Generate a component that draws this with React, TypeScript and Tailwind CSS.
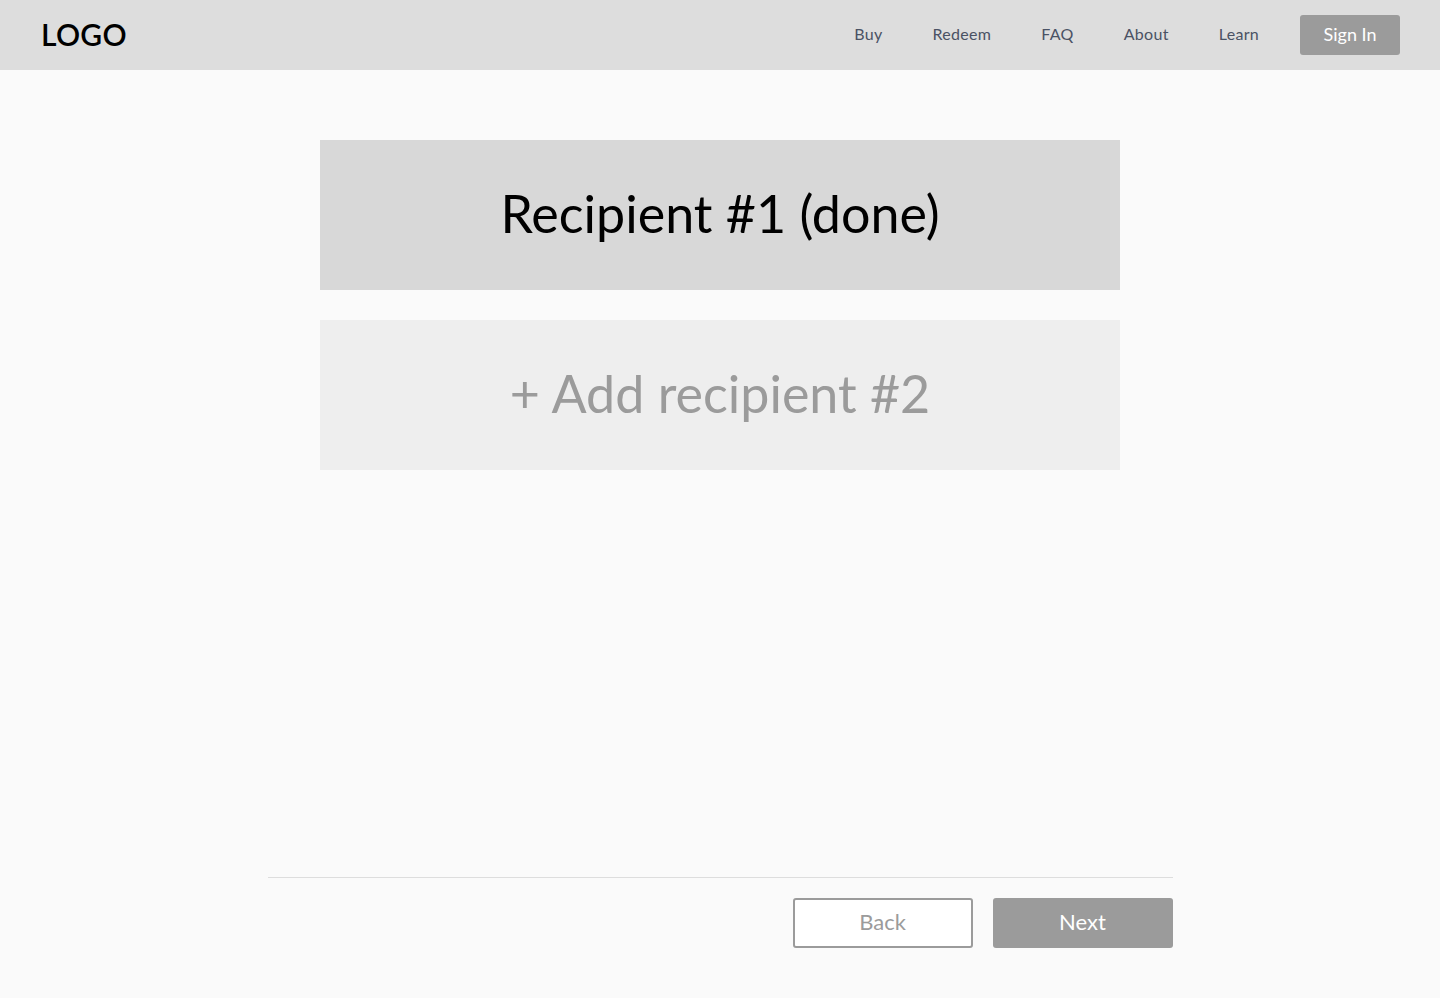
export default function App() {
  const links = ["Buy", "Redeem", "FAQ", "About", "Learn"]

  return (
    <div className="min-h-screen flex flex-col bg-[#fafafa] font-['Lato',sans-serif]">
      <header className="h-[70px] bg-[#dddddd] flex items-center justify-between pl-[41px] pr-[40px]">
        <div className="text-[30px] font-semibold tracking-[0.3px] text-black pb-[2px]">LOGO</div>
        <nav className="flex items-center">
          {links.map((l) => (
            <a key={l} href="#" className="mr-[50px] text-[16px] tracking-[0.3px] text-[#4a5264] pb-[2px]">
              {l}
            </a>
          ))}
          <button className="-ml-[9px] w-[100px] h-[40px] rounded-[3px] bg-[#9b9b9b] text-white text-[18px] pb-[2px]">
            Sign In
          </button>
        </nav>
      </header>

      <main className="flex-1 flex flex-col items-center pt-[70px] gap-[30px]">
        <div className="w-[800px] h-[150px] bg-[#d8d8d8] flex items-center justify-center pb-[4px]">
          <span className="text-[52px] text-black">Recipient #1 (done)</span>
        </div>
        <button className="w-[800px] h-[150px] bg-[#eeeeee] flex items-center justify-center pb-[4px]">
          <span className="text-[52px] text-[#9b9b9b]">+ Add recipient #2</span>
        </button>
      </main>

      <footer className="w-[905px] mx-auto border-t border-[#dddddd] pt-[20px] pb-[50px] flex justify-end gap-[20px]">
        <button className="w-[180px] h-[50px] rounded-[3px] border-2 border-[#9b9b9b] bg-white text-[22px] text-[#9b9b9b] pb-[3px]">
          Back
        </button>
        <button className="w-[180px] h-[50px] rounded-[3px] bg-[#9b9b9b] text-[22px] text-white pb-[3px]">
          Next
        </button>
      </footer>
    </div>
  )
}
